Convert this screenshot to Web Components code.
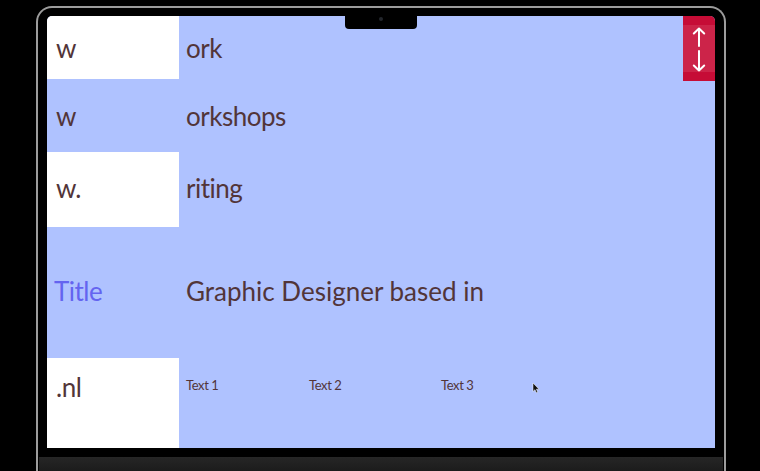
<!DOCTYPE html>
<html lang="en">
<head>
<meta charset="utf-8">
<title>Portfolio</title>
<style>
  html, body { margin: 0; height: 471px; overflow: hidden; background: #000; }
</style>
</head>
<body>
<laptop-frame>
  <site-row h="63" light><span slot="label">w</span>ork</site-row>
  <site-row h="73" ty="0"><span slot="label">w</span>orkshops</site-row>
  <site-row h="75" light ty="-2"><span slot="label">w.</span>riting</site-row>
  <site-row h="131" ty="-2" accent><span slot="label">Title</span>Graphic Designer based in</site-row>
  <site-row h="90" light top>
    <span slot="label">.nl</span>
    <text-links>
      <span style="width:123px">Text 1</span>
      <span style="width:132px">Text 2</span>
      <span>Text 3</span>
    </text-links>
  </site-row>
  <scroll-tab slot="over"></scroll-tab>
</laptop-frame>

<script>
// laptop body round the screen
class LaptopFrame extends HTMLElement {
  connectedCallback() {
    this.attachShadow({ mode: 'open' });
    this.shadowRoot.innerHTML = `
      <style>
        :host { display: flex; flex-direction: column; height: 471px; box-sizing: border-box; padding: 6px 34px 0 36px; }
        * { box-sizing: border-box; }
        .lid {
          flex: 1;
          display: flex;
          flex-direction: column;
          border: 2px solid #9c9c9c;
          border-bottom: 0;
          border-radius: 16px 16px 0 0;
          padding: 8px 9px 0 9px;
        }
        .screen {
          position: relative;
          height: 432px;
          display: flex;
          flex-direction: column;
          background: #afc2ff;
          border-radius: 5px 5px 0 0;
          overflow: hidden;
        }
        .notch {
          position: absolute;
          top: 0;
          left: 298px;
          width: 72px;
          height: 12.5px;
          background: #000;
          border-radius: 0 0 4px 4px;
        }
        .notch::after {
          content: '';
          position: absolute;
          left: 34px;
          top: 1px;
          width: 4px;
          height: 4px;
          border-radius: 50%;
          background: #23262c;
        }
        .cursor { position: absolute; left: 485px; top: 366px; width: 8px; height: 12px; }
        .base {
          height: 14px;
          margin: 9px -8px 0 -8px;
          background: linear-gradient(#262626, #1c1c1c);
        }
      </style>
      <div class="lid">
        <div class="screen">
          <slot></slot>
          <slot name="over"></slot>
          <div class="notch"></div>
          <svg class="cursor" viewBox="0 0 8 12">
            <path d="M1 1v8.5l2-1.8 1.3 3 1.4-.6-1.3-2.9h2.6z" fill="#111" stroke="#fff" stroke-width=".5"/>
          </svg>
        </div>
        <div class="base"></div>
      </div>
    `;
  }
}
customElements.define('laptop-frame', LaptopFrame);

// one line of the page: white or blue label cell, then the rest
class SiteRow extends HTMLElement {
  connectedCallback() {
    this.attachShadow({ mode: 'open' });
    const h = this.getAttribute('h');
    const ty = this.getAttribute('ty') || 0;
    this.shadowRoot.innerHTML = `
      <style>
        :host {
          display: grid;
          grid-template-columns: 132px 1fr;
          height: ${h}px;
          flex: none;
          font: 26px/1 "Lato", "Liberation Sans", sans-serif;
          font-variant-ligatures: none;
          letter-spacing: -.5px;
          color: #523539;
        }
        .label, .body { display: flex; align-items: center; padding-left: 9px; }
        .label > div, .body > div { transform: translateY(${ty}px); }
        .body { padding-left: 7px; }
        :host([light]) .label { background: #fff; }
        :host([accent]) .label { color: #6464f0; padding-left: 7px; }
        :host([accent]) .body { letter-spacing: 0; }
        :host([top]) .label, :host([top]) .body { align-items: flex-start; }
        :host([top]) .label { padding-top: 16px; }
        :host([top]) .body { padding-top: 20px; width: 100%; box-sizing: border-box; }
      </style>
      <div class="label"><div><slot name="label"></slot></div></div>
      <div class="body"><div><slot></slot></div></div>
    `;
  }
}
customElements.define('site-row', SiteRow);

class TextLinks extends HTMLElement {
  connectedCallback() {
    this.attachShadow({ mode: 'open' });
    this.shadowRoot.innerHTML = `
      <style>
        :host { display: flex; font-size: 13px; line-height: 14px; letter-spacing: -.4px; }
        ::slotted(span) { display: block; }
      </style>
      <slot></slot>
    `;
  }
}
customElements.define('text-links', TextLinks);

// red up/down button in the corner
class ScrollTab extends HTMLElement {
  connectedCallback() {
    this.attachShadow({ mode: 'open' });
    this.shadowRoot.innerHTML = `
      <style>
        :host {
          position: absolute;
          top: 0;
          right: 0;
          width: 32px;
          height: 65px;
          display: block;
          background: #c60c36;
        }
        .mid { margin-top: 9px; height: 47px; background: #cc2449; display: block; }
        svg { display: block; width: 32px; height: 47px; }
      </style>
      <div class="mid">
        <svg viewBox="0 0 32 47" fill="none" stroke="#fff" stroke-width="2" stroke-linecap="round" stroke-linejoin="round">
          <path d="M16 21V3.500M10.800 8.500L16 3.500l5.200 5"/>
          <path d="M16 26v19.500M10.800 40.500l5.200 5 5.200-5"/>
        </svg>
      </div>
    `;
  }
}
customElements.define('scroll-tab', ScrollTab);
</script>
</body>
</html>
